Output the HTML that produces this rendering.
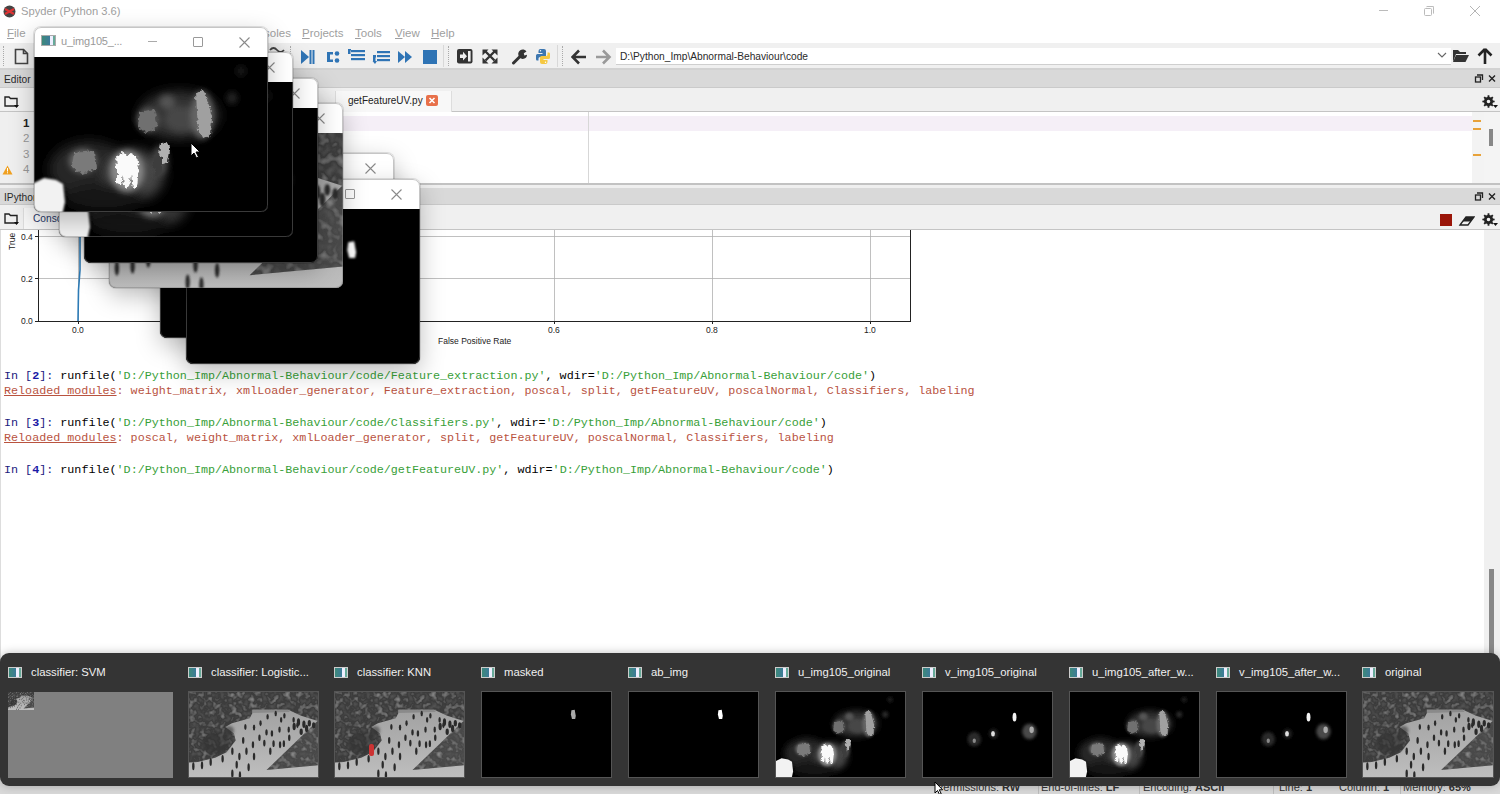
<!DOCTYPE html>
<html><head><meta charset="utf-8">
<style>
*{margin:0;padding:0;box-sizing:border-box}
html,body{width:1500px;height:794px;overflow:hidden;background:#fff;font-family:"Liberation Sans",sans-serif;position:relative}
.a{position:absolute}
.t{position:absolute;white-space:nowrap;line-height:1}
.mono{font-family:"Liberation Mono",monospace}
.menu{position:absolute;top:28px;font-size:11.5px;color:#a0a0a0;white-space:nowrap;line-height:1}
.menu u{text-decoration:underline;text-underline-offset:1px}
.win{position:absolute;width:234px;height:185px;background:#fff;border-radius:7px;overflow:hidden;box-shadow:0 8px 24px rgba(0,0,0,0.25),0 0 0 1px rgba(0,0,0,0.10)}
.win .img{position:absolute;left:0;top:30px;width:234px;height:155px;background:#000}
.win .ic{position:absolute;left:7px;top:8px;width:15px;height:11px;border:1px solid #aaa;background:linear-gradient(90deg,#3d8a7a 0,#3d7a9a 60%,#eef 60%,#eef 85%,#6a9 85%)}
.win .tt{position:absolute;left:27px;top:9px;font-size:11px;color:#999;white-space:nowrap;line-height:1;letter-spacing:-0.2px}
.win .mn{position:absolute;left:114px;top:14px;width:9px;height:1px;background:#aaa}
.win .mx{position:absolute;left:159px;top:10px;width:10px;height:10px;border:1px solid #999;border-radius:1px}
.win svg.cl{position:absolute;left:205px;top:10px;width:11px;height:11px}
.win .bd{position:absolute;left:0;top:0;width:234px;height:185px;border-radius:7px;border:1px solid rgba(128,128,128,0.45);pointer-events:none}
.tb{position:absolute;top:0}
.tb .ic{position:absolute;left:8px;top:14px;width:14px;height:11px;border:1px solid #ccc;background:linear-gradient(90deg,#3d8a7a 0,#3d7a9a 60%,#eef 60%,#eef 85%,#6a9 85%)}
.tb .tt{position:absolute;left:31px;top:14px;font-size:11.3px;color:#f0f0f0;white-space:nowrap;line-height:1}
.tb .th{position:absolute;left:8px;top:38px;width:131px;height:87px;background:#000;overflow:hidden;border:1px solid #555}
.tb svg{display:block;width:100%;height:100%}
.cons{position:absolute;left:4px;font-family:"Liberation Mono",monospace;font-size:11.72px;line-height:1;white-space:pre;color:#000}
.g{color:#38a038}.r{color:#b9533f}.b{color:#1a1aa6;font-weight:bold}.n{color:#20207e}
</style></head><body>

<svg width="0" height="0" style="position:absolute">
<defs>
 <filter id="bl1" x="-50%" y="-50%" width="200%" height="200%"><feGaussianBlur stdDeviation="1"/></filter>
 <filter id="bl2" x="-50%" y="-50%" width="200%" height="200%"><feGaussianBlur stdDeviation="3"/></filter>
 <filter id="bl4" x="-50%" y="-50%" width="200%" height="200%"><feGaussianBlur stdDeviation="6"/></filter>
 <filter id="tex" x="0" y="0" width="1" height="1">
  <feTurbulence type="fractalNoise" baseFrequency="0.09" numOctaves="2" seed="7" result="n"/>
  <feColorMatrix in="n" type="matrix" values="0 0 0 0 0.40  0 0 0 0 0.40  0 0 0 0 0.40  1.5 0 0 0 -0.78" result="light"/>
  <feColorMatrix in="n" type="matrix" values="0 0 0 0 0.12  0 0 0 0 0.12  0 0 0 0 0.12  -1.8 0 0 0 0.85" result="dark"/>
  <feComposite in="light" in2="SourceAlpha" operator="in" result="l2"/>
  <feComposite in="dark" in2="SourceAlpha" operator="in" result="d2"/>
  <feMerge><feMergeNode in="SourceGraphic"/><feMergeNode in="l2"/><feMergeNode in="d2"/></feMerge>
 </filter>
 <filter id="rag" x="-20%" y="-20%" width="140%" height="140%">
  <feTurbulence type="fractalNoise" baseFrequency="0.25" numOctaves="2" seed="3" result="t"/>
  <feDisplacementMap in="SourceGraphic" in2="t" scale="6" xChannelSelector="R" yChannelSelector="G" result="d"/>
  <feGaussianBlur in="d" stdDeviation="0.6"/>
 </filter>
 <symbol id="uimg" viewBox="0 0 234 155" preserveAspectRatio="none">
  <rect width="234" height="155" fill="#000"/>
  <g filter="url(#bl4)">
   <ellipse cx="55" cy="112" rx="40" ry="28" fill="#262626"/>
   <ellipse cx="145" cy="58" rx="40" ry="24" fill="#333"/>
   <ellipse cx="100" cy="118" rx="30" ry="26" fill="#444"/>
   <ellipse cx="70" cy="140" rx="40" ry="14" fill="#151515"/>
  </g>
  <g filter="url(#bl2)">
   <ellipse cx="49" cy="104" rx="14" ry="12" fill="#6a6a6a"/>
   <ellipse cx="114" cy="63" rx="11" ry="12" fill="#5a5a5a"/>
   <ellipse cx="133" cy="45" rx="8" ry="7" fill="#555"/>
   <ellipse cx="148" cy="62" rx="18" ry="13" fill="#474747"/>
   <ellipse cx="168" cy="58" rx="11" ry="24" fill="#666"/>
   <ellipse cx="93" cy="114" rx="17" ry="21" fill="#8a8a8a"/>
   <ellipse cx="126" cy="104" rx="8" ry="15" fill="#4a4a4a"/>
   <ellipse cx="198" cy="41" rx="5" ry="6" fill="#2a2a2a"/>
   <ellipse cx="207" cy="14" rx="5" ry="5" fill="#1a1a1a"/>
  </g>
  <g filter="url(#rag)">
   <path d="M82 98 L88 95 L92 98 L97 96 L103 99 L105 112 L103 130 L99 131 L97 118 L95 130 L90 131 L89 118 L87 128 L83 126 L83 112Z" fill="#fafafa"/>
   <path d="M162 36 L170 34 L174 45 L178 60 L177 78 L170 82 L164 74 L163 55Z" fill="#a0a0a0"/>
   <path d="M127 86 L133 84 L136 94 L134 104 L128 106 L125 96Z" fill="#b0b0b0"/>
   <path d="M121 96 L128 100 L128 118 L122 118 L119 106Z" fill="#3c3c3c"/>
   <path d="M106 55 L120 52 L124 70 L112 76 L104 70Z" fill="#707070"/>
   <path d="M40 96 L60 94 L62 112 L48 117 L38 110Z" fill="#7a7a7a"/>
  </g>
  <path d="M-4 128 L10 121 L22 123 L29 127 L31 145 L28 159 L-4 159Z" fill="#f2f2f2" filter="url(#bl1)"/>
 </symbol>
 <symbol id="vimg" viewBox="0 0 234 155" preserveAspectRatio="none">
  <rect width="234" height="155" fill="#000"/>
  <g filter="url(#bl4)">
   <ellipse cx="45" cy="40" rx="25" ry="20" fill="#040404"/>
  </g>
  <g filter="url(#bl2)">
   <ellipse cx="193" cy="72" rx="13" ry="14" fill="#4a4a4a"/>
   <ellipse cx="93" cy="86" rx="12" ry="13" fill="#2c2c2c"/>
   <ellipse cx="128" cy="76" rx="8" ry="9" fill="#202020"/>
  </g>
  <g filter="url(#bl1)">
   <ellipse cx="166" cy="46" rx="3.5" ry="8" fill="#f4f4f4"/>
   <ellipse cx="127" cy="76" rx="3.5" ry="5" fill="#e0e0e0"/>
   <ellipse cx="197" cy="69" rx="4" ry="6" fill="#aaa"/>
   <ellipse cx="93" cy="89" rx="3" ry="4" fill="#888"/>
  </g>
 </symbol>
 <symbol id="abimg" viewBox="0 0 238 158" preserveAspectRatio="none">
  <rect width="238" height="158" fill="#000"/>
  <path d="M165 34 L171 33 L173 44 L172 50 L166 50 L164 42Z" fill="#fff" filter="url(#bl1)"/>
 </symbol>
 <symbol id="maskimg" viewBox="0 0 238 158" preserveAspectRatio="none">
  <rect width="238" height="158" fill="#000"/>
  <path d="M165 34 L171 33 L173 44 L172 50 L166 50 L164 42Z" fill="#aaa" filter="url(#bl1)"/>
 </symbol>
 <symbol id="plaza" viewBox="0 0 238 158" preserveAspectRatio="none">
  <defs><linearGradient id="wg" x1="0" y1="0" x2="0" y2="1"><stop offset="0" stop-color="#9a9a9a"/><stop offset="1" stop-color="#bebebe"/></linearGradient></defs>
  <rect width="238" height="158" fill="url(#wg)"/>
  <path d="M0 0 H238 V54 L207 44 L183 33 L117 33 L117 39 L112 49 L79 58 L67 65 L83 77 L86 90 L69 112 L48 122 L16 130 L0 131 Z" fill="#3e3e3e" filter="url(#tex)"/>
  <g filter="url(#bl2)" opacity="0.6"><ellipse cx="50" cy="95" rx="26" ry="20" fill="#333"/><ellipse cx="74" cy="72" rx="9" ry="9" fill="#333"/></g>
  <path d="M117 33 L183 33 L186 37 L117 39Z" fill="#8a8a8a" filter="url(#bl1)"/>
  <path d="M143 145 L238 53 L238 136 Z" fill="#4a4a4a" filter="url(#tex)"/>
  <g fill="#2a2a2a" filter="url(#bl1)"><ellipse cx="145" cy="46" rx="2.2" ry="5.2"/><ellipse cx="160" cy="40" rx="2.2" ry="5.0"/><ellipse cx="176" cy="44" rx="2.2" ry="5.1"/><ellipse cx="193" cy="52" rx="2.2" ry="5.3"/><ellipse cx="104" cy="65" rx="2.2" ry="5.6"/><ellipse cx="120" cy="66" rx="2.2" ry="5.7"/><ellipse cx="143" cy="75" rx="2.2" ry="5.9"/><ellipse cx="153" cy="77" rx="2.2" ry="5.9"/><ellipse cx="167" cy="70" rx="2.2" ry="5.8"/><ellipse cx="184" cy="70" rx="2.2" ry="5.8"/><ellipse cx="139" cy="95" rx="2.2" ry="6.4"/><ellipse cx="156" cy="96" rx="2.2" ry="6.4"/><ellipse cx="168" cy="98" rx="2.2" ry="6.5"/><ellipse cx="175" cy="96" rx="2.2" ry="6.4"/><ellipse cx="118" cy="98" rx="2.2" ry="6.5"/><ellipse cx="106" cy="110" rx="2.2" ry="6.8"/><ellipse cx="93" cy="120" rx="2.2" ry="7.0"/><ellipse cx="80" cy="110" rx="2.2" ry="6.8"/><ellipse cx="62" cy="124" rx="2.2" ry="7.1"/><ellipse cx="24" cy="136" rx="2.2" ry="7.4"/><ellipse cx="8" cy="138" rx="2.2" ry="7.5"/><ellipse cx="80" cy="152" rx="2.2" ry="7.8"/><ellipse cx="94" cy="155" rx="2.2" ry="7.9"/><ellipse cx="120" cy="120" rx="2.2" ry="7.0"/><ellipse cx="132" cy="58" rx="2.2" ry="5.5"/><ellipse cx="170" cy="52" rx="2.2" ry="5.3"/><ellipse cx="200" cy="62" rx="2.2" ry="5.5"/><ellipse cx="150" cy="110" rx="2.2" ry="6.8"/><ellipse cx="100" cy="90" rx="2.2" ry="6.2"/><ellipse cx="88" cy="135" rx="2.2" ry="7.4"/><ellipse cx="110" cy="140" rx="2.2" ry="7.5"/><ellipse cx="40" cy="130" rx="2.2" ry="7.2"/><ellipse cx="185" cy="85" rx="2.2" ry="6.1"/><ellipse cx="130" cy="85" rx="2.2" ry="6.1"/><ellipse cx="202" cy="56" rx="3" ry="7"/><ellipse cx="212" cy="60" rx="3" ry="7"/><ellipse cx="222" cy="58" rx="3" ry="6"/><ellipse cx="217" cy="68" rx="3" ry="7"/><ellipse cx="230" cy="62" rx="3" ry="6"/><ellipse cx="194" cy="64" rx="3" ry="7"/><ellipse cx="207" cy="74" rx="3" ry="6"/></g>
 </symbol>
</defs>
</svg>

<!-- ========== title bar ========== -->
<svg class="a" style="left:3px;top:5px" width="13" height="13" viewBox="0 0 13 13"><circle cx="6.5" cy="6.5" r="6" fill="#444"/><path d="M2 4 L11 9 M2 9 L11 4" stroke="#d33" stroke-width="2.2"/></svg>
<div class="t" style="left:21px;top:6px;font-size:11.2px;color:#a0a0a0">Spyder (Python 3.6)</div>
<div class="a" style="left:1379px;top:10px;width:9px;height:1px;background:#bbb"></div>
<div class="a" style="left:1424px;top:8px;width:8px;height:8px;border:1px solid #bbb;border-radius:1.5px"></div>
<div class="a" style="left:1426px;top:6px;width:8px;height:8px;border-top:1px solid #bbb;border-right:1px solid #bbb;border-radius:1.5px"></div>
<svg class="a" style="left:1470px;top:6px" width="10" height="10" viewBox="0 0 10 10"><path d="M0 0L10 10M10 0L0 10" stroke="#b5b5b5" stroke-width="1"/></svg>

<!-- menu -->
<div class="menu" style="left:7px"><u>F</u>ile</div>
<div class="menu" style="left:243px">Consoles</div>
<div class="menu" style="left:302px"><u>P</u>rojects</div>
<div class="menu" style="left:355px"><u>T</u>ools</div>
<div class="menu" style="left:395px"><u>V</u>iew</div>
<div class="menu" style="left:431px"><u>H</u>elp</div>

<!-- ========== toolbar ========== -->
<div class="a" style="left:0;top:43px;width:1500px;height:26px;background:#f0f0f0"></div>
<div class="a" style="left:0;top:68px;width:1500px;height:2px;background:#d2d2d2"></div>
<div class="a" style="left:3px;top:46px;width:0;height:20px;border-left:1px dotted #aaa"></div>
<svg class="a" style="left:14px;top:48px" width="15" height="17" viewBox="0 0 15 17"><path d="M1.5 1.5 H9.5 L13.5 5.5 V15.5 H1.5Z" fill="none" stroke="#444" stroke-width="1.6"/><path d="M9.5 1.5 V5.5 H13.5" fill="none" stroke="#444" stroke-width="1.6"/></svg>
<svg class="a" style="left:269px;top:45px" width="16" height="10" viewBox="0 0 16 10"><path d="M1 5 Q4.5 1 8 5 T15 5" fill="none" stroke="#444" stroke-width="1.8"/></svg>
<div class="a" style="left:290px;top:46px;width:0;height:20px;border-left:1px dotted #aaa"></div>
<svg class="a" style="left:300px;top:49px" width="140" height="16" viewBox="0 0 140 16">
 <g fill="#2f74b5">
  <path d="M1 1 L9 8 L1 15Z"/><rect x="9.5" y="1" width="2" height="14"/><rect x="12.5" y="1" width="2" height="14"/>
  <path d="M27 3 H33 V5.5 H30 V10.5 H33 V13 H27Z"/><circle cx="37" cy="4.5" r="2.3"/><circle cx="37" cy="11.5" r="2.3"/>
  <path d="M48 -1 H51 V1.5 H50.5 V5 H48Z"/><rect x="51" y="1" width="14" height="2.2"/><rect x="51" y="5" width="14" height="2.2"/><rect x="51" y="9" width="14" height="2.2"/>
  <rect x="77" y="2" width="13" height="2.2"/><rect x="77" y="6" width="13" height="2.2"/><rect x="77" y="10" width="13" height="2.2"/><path d="M73 6 H76 V8.5 H75.5 V12 H77 L75 15 L72.5 12 H73Z"/>
  <path d="M98 2 L105 8 L98 14Z"/><path d="M105 2 L112 8 L105 14Z"/>
  <rect x="123" y="1" width="14" height="14"/>
 </g>
</svg>
<div class="a" style="left:443px;top:45px;width:1px;height:22px;background:#d8d8d8"></div>
<div class="a" style="left:448px;top:46px;width:0;height:20px;border-left:1px dotted #aaa"></div>
<svg class="a" style="left:456px;top:48px" width="100" height="17" viewBox="0 0 100 17">
 <rect x="1" y="1" width="15.5" height="14.5" rx="2" fill="#333"/>
 <rect x="12" y="3" width="2.6" height="10.5" fill="#f0f0f0"/>
 <path d="M4 6.5 H7 V3.8 L11 8.2 L7 12.6 V9.9 H4Z" fill="#f0f0f0"/>
 <g stroke="#333" stroke-width="2.4" fill="none"><path d="M29.5 3.5 L38.5 12.5 M38.5 3.5 L29.5 12.5"/></g>
 <g fill="#333"><path d="M26.5 1.5 H32.5 L26.5 7.5Z"/><path d="M41.5 1.5 H35.5 L41.5 7.5Z"/><path d="M26.5 15.5 H32.5 L26.5 9.5Z"/><path d="M41.5 15.5 H35.5 L41.5 9.5Z"/></g>
 <path d="M57.5 15 L65 7.5" stroke="#333" stroke-width="3" stroke-linecap="round"/><path d="M63 8.5 A4.2 4.2 0 1 1 70.5 3.5 L67.8 5.2 L68.4 7.6 L71 6.8 A4.2 4.2 0 0 1 63 8.5Z" fill="#333"/>
 <path d="M84.5 1 H88 Q90 1 90 3 V7.5 Q90 9 88.5 9 H84 Q82.5 9 82.5 10.5 V12.5 H81 Q80 12.5 80 11 V7.5 Q80 6 81.5 6 H86.5 V5 H82.5 V3 Q82.5 1 84.5 1Z" fill="#3d77b0"/>
 <path d="M89.5 16 H86 Q84 16 84 14 V9.5 Q84 8 85.5 8 H90 Q91.5 8 91.5 6.5 V4.5 H93 Q94 4.5 94 6 V9.5 Q94 11 92.5 11 H87.5 V12 H91.5 V14 Q91.5 16 89.5 16Z" fill="#f5c842"/>
 <circle cx="84.5" cy="2.8" r="0.7" fill="#fff"/><circle cx="89.5" cy="14.2" r="0.7" fill="#fff"/>
</svg>
<div class="a" style="left:557px;top:45px;width:1px;height:22px;background:#d8d8d8"></div>
<div class="a" style="left:562px;top:46px;width:0;height:20px;border-left:1px dotted #aaa"></div>
<svg class="a" style="left:571px;top:49px" width="42" height="16" viewBox="0 0 42 16">
 <path d="M8 1.5 L1.5 8 L8 14.5 M2 8 H15" fill="none" stroke="#333" stroke-width="2.6"/>
 <path d="M32 1.5 L38.5 8 L32 14.5 M38 8 H25" fill="none" stroke="#999" stroke-width="2.6"/>
</svg>
<div class="a" style="left:616px;top:48px;width:835px;height:17px;background:#fff;border-bottom:1px solid #cfcfcf"></div>
<div class="t" style="left:620px;top:52px;font-size:10.2px;color:#2a2a2a">D:\Python_Imp\Abnormal-Behaviour\code</div>
<svg class="a" style="left:1437px;top:52px" width="10" height="7" viewBox="0 0 10 7"><path d="M1 1 L5 5 L9 1" fill="none" stroke="#666" stroke-width="1.1"/></svg>
<svg class="a" style="left:1452px;top:48px" width="18" height="16" viewBox="0 0 18 16"><path d="M1 2 H6 L8 4 H14 V6 H4 L1 14Z" fill="#333"/><path d="M4 7 H17 L13.5 14 H1Z" fill="#333"/></svg>
<svg class="a" style="left:1477px;top:48px" width="16" height="17" viewBox="0 0 16 17"><path d="M8 1 L1.5 7.5 M8 1 L14.5 7.5 M8 1.5 V16" fill="none" stroke="#222" stroke-width="2.6"/></svg>

<!-- ========== editor dock ========== -->
<div class="a" style="left:0;top:70px;width:1500px;height:18px;background:#d9d9d9;border-bottom:1px solid #cacaca"></div>
<div class="t" style="left:4px;top:75px;font-size:10.2px;color:#2a2a2a">Editor</div>
<svg class="a" style="left:1474px;top:74px" width="24" height="10" viewBox="0 0 24 10"><rect x="1.5" y="3" width="5" height="5" fill="none" stroke="#222" stroke-width="1.3"/><path d="M3 1 H8.5 V6" fill="none" stroke="#222" stroke-width="1.3"/><path d="M15 1.5 L21 7.5 M21 1.5 L15 7.5" stroke="#222" stroke-width="1.4"/></svg>
<div class="a" style="left:0;top:88px;width:1500px;height:23px;background:#f0f0f0"></div>
<div class="a" style="left:0;top:111px;width:1500px;height:1px;background:#c4c4c4"></div>
<svg class="a" style="left:4px;top:95px" width="16" height="14" viewBox="0 0 16 14"><path d="M1 2 H5 L6.5 3.5 H13 V11 H1Z" fill="none" stroke="#222" stroke-width="1.4"/><path d="M10 10 H15 L12.5 13Z" fill="#111"/></svg>
<div class="a" style="left:335px;top:91px;width:117px;height:21px;background:#f8f8f8;border-left:1px solid #ddd;border-right:1px solid #ddd"></div>
<div class="t" style="left:348px;top:96px;font-size:10px;color:#222">getFeatureUV.py</div>
<div class="a" style="left:426px;top:95px;width:12px;height:11px;background:#e8704a;border-radius:2px"></div>
<svg class="a" style="left:426px;top:95px" width="12" height="11" viewBox="0 0 12 11"><path d="M3.5 3 L8.5 8 M8.5 3 L3.5 8" stroke="#fff" stroke-width="1.6"/></svg>
<svg class="a" style="left:1482px;top:95px" width="17" height="14" viewBox="0 0 17 14"><path fill-rule="evenodd" fill="#222" d="M10.99 5.50 L12.64 5.63 L12.64 7.37 L10.99 7.50 L10.38 8.96 L11.45 10.23 L10.23 11.45 L8.96 10.38 L7.50 10.99 L7.37 12.64 L5.63 12.64 L5.50 10.99 L4.04 10.38 L2.77 11.45 L1.55 10.23 L2.62 8.96 L2.01 7.50 L0.36 7.37 L0.36 5.63 L2.01 5.50 L2.62 4.04 L1.55 2.77 L2.77 1.55 L4.04 2.62 L5.50 2.01 L5.63 0.36 L7.37 0.36 L7.50 2.01 L8.96 2.62 L10.23 1.55 L11.45 2.77 L10.38 4.04Z M6.5 4.7 A1.8 1.8 0 1 0 6.5 8.3 A1.8 1.8 0 1 0 6.5 4.7Z"/><path d="M11 10 H16 L13.5 13Z" fill="#111"/></svg>

<div class="a" style="left:0;top:112px;width:1500px;height:71px;background:#fff"></div>
<div class="a" style="left:0;top:112px;width:38px;height:71px;background:#efefef"></div>
<div class="a" style="left:38px;top:116px;width:1434px;height:15px;background:#f5eff7"></div>
<div class="a" style="left:588px;top:112px;width:1px;height:71px;background:#d7d7d7"></div>
<div class="a" style="left:1472px;top:112px;width:12px;height:71px;background:#f3f3f3"></div>
<div class="a" style="left:1484px;top:112px;width:16px;height:71px;background:#f4f4f4"></div>
<div class="a" style="left:1473px;top:120px;width:8px;height:2px;background:#e8a23a"></div>
<div class="a" style="left:1473px;top:128px;width:8px;height:2px;background:#e8a23a"></div>
<div class="a" style="left:1473px;top:154px;width:8px;height:2px;background:#e8a23a"></div>
<div class="a" style="left:1489px;top:129px;width:4px;height:17px;background:#888"></div>
<div class="t" style="left:23px;top:118px;font-size:11.5px;color:#222;font-weight:bold">1</div>
<div class="t" style="left:23px;top:133px;font-size:11.5px;color:#999">2</div>
<div class="t" style="left:23px;top:149px;font-size:11.5px;color:#999">3</div>
<div class="t" style="left:23px;top:164px;font-size:11.5px;color:#999">4</div>
<svg class="a" style="left:2px;top:165px" width="11" height="10" viewBox="0 0 11 10"><path d="M5.5 0.5 L10.5 9.5 H0.5Z" fill="#f0a020"/><rect x="5" y="3" width="1" height="3.5" fill="#fff"/><rect x="5" y="7.3" width="1" height="1" fill="#fff"/></svg>

<div class="a" style="left:0;top:183px;width:1500px;height:2px;background:#c2c2c2"></div>
<div class="a" style="left:0;top:185px;width:1500px;height:3px;background:#efefef"></div>

<!-- ========== ipython dock ========== -->
<div class="a" style="left:0;top:188px;width:1500px;height:17px;background:#d9d9d9;border-bottom:1px solid #cacaca"></div>
<div class="t" style="left:4px;top:193px;font-size:10.2px;color:#2a2a2a">IPython console</div>
<svg class="a" style="left:1474px;top:192px" width="24" height="10" viewBox="0 0 24 10"><rect x="1.5" y="3" width="5" height="5" fill="none" stroke="#222" stroke-width="1.3"/><path d="M3 1 H8.5 V6" fill="none" stroke="#222" stroke-width="1.3"/><path d="M15 1.5 L21 7.5 M21 1.5 L15 7.5" stroke="#222" stroke-width="1.4"/></svg>
<div class="a" style="left:0;top:205px;width:1500px;height:24px;background:#f0f0f0"></div>
<div class="a" style="left:0;top:229px;width:1500px;height:1px;background:#c4c4c4"></div>
<svg class="a" style="left:4px;top:212px" width="16" height="14" viewBox="0 0 16 14"><path d="M1 2 H5 L6.5 3.5 H13 V11 H1Z" fill="none" stroke="#222" stroke-width="1.4"/><path d="M10 10 H15 L12.5 13Z" fill="#111"/></svg>
<div class="a" style="left:23px;top:208px;width:90px;height:21px;background:#f8f8f8;border-left:1px solid #ddd"></div>
<div class="t" style="left:33px;top:214px;font-size:10.2px;color:#2a3a6a">Console 1/A</div>
<div class="a" style="left:1440px;top:214px;width:12px;height:12px;background:#9a1508"></div>
<svg class="a" style="left:1458px;top:213px" width="17" height="14" viewBox="0 0 17 14"><path d="M2 12 L8 4 H16 L10 12Z" fill="none" stroke="#222" stroke-width="1.3"/><path d="M8 4 H16 L12.5 8.5 H4.8Z" fill="#222"/></svg>
<svg class="a" style="left:1482px;top:213px" width="17" height="14" viewBox="0 0 17 14"><path fill-rule="evenodd" fill="#222" d="M10.99 5.50 L12.64 5.63 L12.64 7.37 L10.99 7.50 L10.38 8.96 L11.45 10.23 L10.23 11.45 L8.96 10.38 L7.50 10.99 L7.37 12.64 L5.63 12.64 L5.50 10.99 L4.04 10.38 L2.77 11.45 L1.55 10.23 L2.62 8.96 L2.01 7.50 L0.36 7.37 L0.36 5.63 L2.01 5.50 L2.62 4.04 L1.55 2.77 L2.77 1.55 L4.04 2.62 L5.50 2.01 L5.63 0.36 L7.37 0.36 L7.50 2.01 L8.96 2.62 L10.23 1.55 L11.45 2.77 L10.38 4.04Z M6.5 4.7 A1.8 1.8 0 1 0 6.5 8.3 A1.8 1.8 0 1 0 6.5 4.7Z"/><path d="M11 10 H16 L13.5 13Z" fill="#111"/></svg>

<!-- console content -->
<div class="a" style="left:0;top:230px;width:1500px;height:548px;background:#fff"></div>
<div class="a" style="left:0;top:230px;width:1px;height:548px;background:#ddd"></div>
<div class="a" style="left:1484px;top:230px;width:16px;height:548px;background:#f0f0f0"></div>
<div class="a" style="left:1489px;top:569px;width:5px;height:85px;background:#888"></div>

<!-- chart -->
<svg class="a" style="left:0;top:230px" width="930" height="120" viewBox="0 230 930 120">
 <g stroke="#b0b0b0" stroke-width="0.8">
  <line x1="38" y1="236.5" x2="910" y2="236.5"/><line x1="38" y1="278.5" x2="910" y2="278.5"/>
  <line x1="554.5" y1="230" x2="554.5" y2="321"/><line x1="712.5" y1="230" x2="712.5" y2="321"/><line x1="870.5" y1="230" x2="870.5" y2="321"/>
  <line x1="78.5" y1="230" x2="78.5" y2="321"/>
 </g>
 <g stroke="#222" stroke-width="1"><line x1="38.5" y1="230" x2="38.5" y2="321.5"/><line x1="38" y1="321.5" x2="911" y2="321.5"/><line x1="910.5" y1="230" x2="910.5" y2="321.5"/>
  <line x1="35" y1="236.5" x2="38" y2="236.5"/><line x1="35" y1="278.5" x2="38" y2="278.5"/><line x1="35" y1="321.5" x2="38" y2="321.5"/>
  <line x1="78.5" y1="321" x2="78.5" y2="324"/><line x1="554.5" y1="321" x2="554.5" y2="324"/><line x1="712.5" y1="321" x2="712.5" y2="324"/><line x1="870.5" y1="321" x2="870.5" y2="324"/></g>
 <path d="M78 321 L78.5 290 L80 270 L80 230" fill="none" stroke="#2d7bb6" stroke-width="1.6"/>
 <g font-family="Liberation Sans" font-size="8.5" fill="#222">
  <text x="21" y="239.5">0.4</text><text x="21" y="281.5">0.2</text><text x="21" y="324">0.0</text>
  <text x="72" y="333">0.0</text><text x="548" y="333">0.6</text><text x="706" y="333">0.8</text><text x="864" y="333">1.0</text>
  <text x="438" y="344">False Positive Rate</text>
  <text transform="translate(15 250) rotate(-90)">True Positive Rate</text>
 </g>
</svg>

<!-- console text -->
<div class="cons" style="top:371px"><span class="n">In [</span><span class="b">2</span><span class="n">]:</span> runfile(<span class="g">'D:/Python_Imp/Abnormal-Behaviour/code/Feature_extraction.py'</span>, wdir=<span class="g">'D:/Python_Imp/Abnormal-Behaviour/code'</span>)</div>
<div class="cons r" style="top:386px"><u>Reloaded modules</u>: weight_matrix, xmlLoader_generator, Feature_extraction, poscal, split, getFeatureUV, poscalNormal, Classifiers, labeling</div>
<div class="cons" style="top:418px"><span class="n">In [</span><span class="b">3</span><span class="n">]:</span> runfile(<span class="g">'D:/Python_Imp/Abnormal-Behaviour/code/Classifiers.py'</span>, wdir=<span class="g">'D:/Python_Imp/Abnormal-Behaviour/code'</span>)</div>
<div class="cons r" style="top:433px"><u>Reloaded modules</u>: poscal, weight_matrix, xmlLoader_generator, split, getFeatureUV, poscalNormal, Classifiers, labeling</div>
<div class="cons" style="top:465px"><span class="n">In [</span><span class="b">4</span><span class="n">]:</span> runfile(<span class="g">'D:/Python_Imp/Abnormal-Behaviour/code/getFeatureUV.py'</span>, wdir=<span class="g">'D:/Python_Imp/Abnormal-Behaviour/code'</span>)</div>

<!-- status bar -->
<div class="a" style="left:0;top:778px;width:1500px;height:16px;background:#d9d9d9"></div>
<div class="a" style="left:1038px;top:780px;width:1px;height:14px;background:#bdbdbd"></div>
<div class="a" style="left:1139px;top:780px;width:1px;height:14px;background:#bdbdbd"></div>
<div class="a" style="left:1273px;top:780px;width:1px;height:14px;background:#bdbdbd"></div>
<div class="a" style="left:1400px;top:780px;width:1px;height:14px;background:#bdbdbd"></div>
<svg class="a" style="left:934px;top:781px;z-index:12" width="11" height="14" viewBox="0 0 11 14"><path d="M1 1 V12 L3.5 9.5 L5.5 13.5 L7.2 12.7 L5.3 8.8 H8.6Z" fill="#fff" stroke="#000" stroke-width="1"/></svg>
<div class="t" style="left:936px;top:782px;font-size:11px;color:#333">Permissions: <b>RW</b></div>
<div class="t" style="left:1041px;top:782px;font-size:11px;color:#333">End-of-lines: <b>LF</b></div>
<div class="t" style="left:1143px;top:782px;font-size:11px;color:#333">Encoding: <b>ASCII</b></div>
<div class="t" style="left:1279px;top:782px;font-size:11px;color:#333">Line: <b>1</b></div>
<div class="t" style="left:1339px;top:782px;font-size:11px;color:#333">Column: <b>1</b></div>
<div class="t" style="left:1403px;top:782px;font-size:11px;color:#333">Memory: <b>65%</b></div>

<!-- ========== stacked windows ========== -->
<div class="win" style="left:186px;top:179px;z-index:2">
 <div class="ic"></div><div class="tt">ab_img</div><div class="mn"></div><div class="mx"></div>
 <svg class="cl" viewBox="0 0 11 11"><path d="M0.5 0.5L10.5 10.5M10.5 0.5L0.5 10.5" stroke="#8a8a8a" stroke-width="1.1"/></svg>
 <div class="img"><svg width="234" height="155"><use href="#abimg" width="234" height="155"/></svg></div><div class="bd"></div>
</div>
<div class="win" style="left:160px;top:153px;z-index:1">
 <div class="ic"></div><div class="tt">masked</div><div class="mn"></div><div class="mx"></div>
 <svg class="cl" viewBox="0 0 11 11"><path d="M0.5 0.5L10.5 10.5M10.5 0.5L0.5 10.5" stroke="#8a8a8a" stroke-width="1.1"/></svg>
 <div class="img"><svg width="234" height="155"><use href="#maskimg" width="234" height="155"/></svg></div><div class="bd"></div>
</div>
<div class="win" style="left:109px;top:103px;z-index:3">
 <div class="ic"></div><div class="tt">original</div><div class="mn"></div><div class="mx"></div>
 <svg class="cl" viewBox="0 0 11 11"><path d="M0.5 0.5L10.5 10.5M10.5 0.5L0.5 10.5" stroke="#8a8a8a" stroke-width="1.1"/></svg>
 <div class="img"><svg width="234" height="155"><use href="#plaza" width="234" height="155"/></svg></div><div class="bd"></div>
</div>
<div class="win" style="left:84px;top:78px;z-index:4">
 <div class="ic"></div><div class="tt">v_img105_...</div><div class="mn"></div><div class="mx"></div>
 <svg class="cl" viewBox="0 0 11 11"><path d="M0.5 0.5L10.5 10.5M10.5 0.5L0.5 10.5" stroke="#8a8a8a" stroke-width="1.1"/></svg>
 <div class="img"><svg width="234" height="155"><use href="#vimg" width="234" height="155"/></svg></div><div class="bd"></div>
</div>
<div class="win" style="left:59px;top:52px;z-index:5">
 <div class="ic"></div><div class="tt">u_img105_...</div><div class="mn"></div><div class="mx"></div>
 <svg class="cl" viewBox="0 0 11 11"><path d="M0.5 0.5L10.5 10.5M10.5 0.5L0.5 10.5" stroke="#8a8a8a" stroke-width="1.1"/></svg>
 <div class="img"><svg width="234" height="155"><use href="#uimg" width="234" height="155"/></svg></div><div class="bd"></div>
</div>
<div class="win" style="left:34px;top:27px;z-index:6">
 <div class="ic"></div><div class="tt">u_img105_...</div><div class="mn"></div><div class="mx"></div>
 <svg class="cl" viewBox="0 0 11 11"><path d="M0.5 0.5L10.5 10.5M10.5 0.5L0.5 10.5" stroke="#8a8a8a" stroke-width="1.1"/></svg>
 <div class="img"><svg width="234" height="155"><use href="#uimg" width="234" height="155"/></svg></div><div class="bd"></div>
</div>
<svg class="a" style="left:190px;top:142px;z-index:7" width="11" height="17" viewBox="0 0 11 17"><path d="M1 1 V14 L4 11 L6.5 16 L8.5 15 L6 10 H10Z" fill="#fff" stroke="#000" stroke-width="1"/></svg>

<!-- ========== taskbar thumbnails ========== -->
<div class="a" style="left:0;top:653px;width:1500px;height:133px;background:#343434;border-radius:9px;z-index:10;box-shadow:0 0 10px rgba(0,0,0,0.25)">
 <div class="tb" style="left:0"><div class="ic"></div><div class="tt">classifier: SVM</div>
  <div class="th" style="width:165px;height:86px;top:39px;background:#808080;border:none"><svg style="width:26px;height:18px"><use href="#plaza" width="26" height="18"/></svg></div></div>
 <div class="tb" style="left:180px"><div class="ic"></div><div class="tt">classifier: Logistic...</div><div class="th"><svg><use href="#plaza" width="100%" height="100%"/></svg></div></div>
 <div class="tb" style="left:326px"><div class="ic"></div><div class="tt">classifier: KNN</div><div class="th"><svg><use href="#plaza" width="100%" height="100%"/></svg><div class="a" style="left:34px;top:52px;width:5px;height:12px;background:#c33;border-radius:2px"></div></div></div>
 <div class="tb" style="left:473px"><div class="ic"></div><div class="tt">masked</div><div class="th"><svg><use href="#maskimg" width="100%" height="100%"/></svg></div></div>
 <div class="tb" style="left:620px"><div class="ic"></div><div class="tt">ab_img</div><div class="th"><svg><use href="#abimg" width="100%" height="100%"/></svg></div></div>
 <div class="tb" style="left:767px"><div class="ic"></div><div class="tt">u_img105_original</div><div class="th"><svg><use href="#uimg" width="100%" height="100%"/></svg></div></div>
 <div class="tb" style="left:914px"><div class="ic"></div><div class="tt">v_img105_original</div><div class="th"><svg><use href="#vimg" width="100%" height="100%"/></svg></div></div>
 <div class="tb" style="left:1061px"><div class="ic"></div><div class="tt">u_img105_after_w...</div><div class="th"><svg><use href="#uimg" width="100%" height="100%"/></svg></div></div>
 <div class="tb" style="left:1208px"><div class="ic"></div><div class="tt">v_img105_after_w...</div><div class="th"><svg><use href="#vimg" width="100%" height="100%"/></svg></div></div>
 <div class="tb" style="left:1354px"><div class="ic"></div><div class="tt">original</div><div class="th" style="width:132px"><svg><use href="#plaza" width="100%" height="100%"/></svg></div></div>
</div>

</body></html>
